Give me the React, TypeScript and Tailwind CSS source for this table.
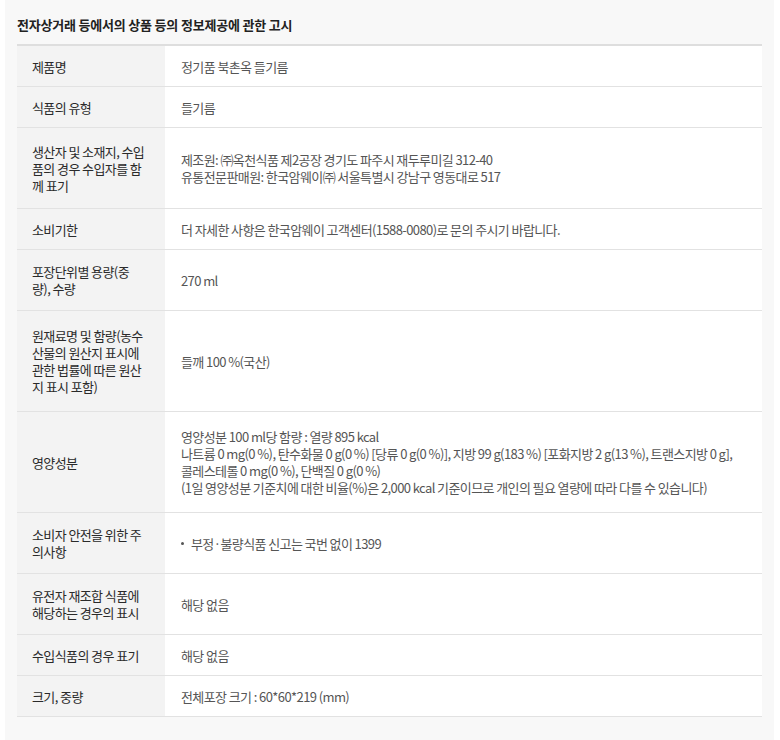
import React from 'react'

type Row = {
  label: string[]
  value: React.ReactNode
  h: string
}

const rows: Row[] = [
  { label: ['제품명'], value: '정기품 북촌옥 들기름', h: 'h-[41px]' },
  { label: ['식품의 유형'], value: '들기름', h: 'h-[41px]' },
  {
    label: ['생산자 및 소재지, 수입', '품의 경우 수입자를 함', '께 표기'],
    value: (
      <>
        <p>제조원: ㈜옥천식품 제2공장 경기도 파주시 재두루미길 312-40</p>
        <p>유통전문판매원: 한국암웨이㈜ 서울특별시 강남구 영동대로 517</p>
      </>
    ),
    h: 'h-[81px]',
  },
  { label: ['소비기한'], value: '더 자세한 사항은 한국암웨이 고객센터(1588-0080)로 문의 주시기 바랍니다.', h: 'h-[41px]' },
  { label: ['포장단위별 용량(중', '량), 수량'], value: '270 ml', h: 'h-[61px]' },
  {
    label: ['원재료명 및 함량(농수', '산물의 원산지 표시에', '관한 법률에 따른 원산', '지 표시 포함)'],
    value: '들깨 100 %(국산)',
    h: 'h-[101px]',
  },
  {
    label: ['영양성분'],
    value: (
      <>
        <p>영양성분 100 ml당 함량 : 열량 895 kcal</p>
        <p>나트륨 0 mg(0 %), 탄수화물 0 g(0 %) [당류 0 g(0 %)], 지방 99 g(183 %) [포화지방 2 g(13 %), 트랜스지방 0 g],</p>
        <p>콜레스테롤 0 mg(0 %), 단백질 0 g(0 %)</p>
        <p>(1일 영양성분 기준치에 대한 비율(%)은 2,000 kcal 기준이므로 개인의 필요 열량에 따라 다를 수 있습니다)</p>
      </>
    ),
    h: 'h-[101px]',
  },
  {
    label: ['소비자 안전을 위한 주', '의사항'],
    value: (
      <ul>
        <li className="flex items-center">
          <span className="mr-[7px] inline-block h-[3px] w-[3px] rounded-full bg-[#555]" />
          부정·불량식품 신고는 국번 없이 1399
        </li>
      </ul>
    ),
    h: 'h-[61px]',
  },
  { label: ['유전자 재조합 식품에', '해당하는 경우의 표시'], value: '해당 없음', h: 'h-[61px]' },
  { label: ['수입식품의 경우 표기'], value: '해당 없음', h: 'h-[41px]' },
  { label: ['크기, 중량'], value: '전체포장 크기 : 60*60*219 (mm)', h: 'h-[41px]' },
]

export default function App() {
  return (
    <div
      className="min-h-screen bg-white pl-[5px] pr-[6px] text-[13px] leading-[17px] tracking-[-0.6px]"
      style={{ fontFamily: '"Noto Sans CJK KR", "Noto Sans", sans-serif' }}
    >
      <div className="h-[740px] bg-[#f8f8f8] px-3 pt-4">
        <h2 className="mb-[11px] text-[13px] font-bold tracking-[-0.2px] text-[#222]">
          전자상거래 등에서의 상품 등의 정보제공에 관한 고시
        </h2>
        <div className="border-t-2 border-[#dedede]">
          {rows.map((row, i) => (
            <div key={i} className={`flex border-b border-[#e2e2e2] ${row.h}`}>
              <div className="flex w-[148px] shrink-0 flex-col justify-center bg-[#f3f3f3] px-[15px] text-[#2a2a2a]">
                {row.label.map((l, j) => (
                  <span key={j}>{l}</span>
                ))}
              </div>
              <div className="flex flex-1 flex-col justify-center bg-white pl-4 text-[#555]">{row.value}</div>
            </div>
          ))}
        </div>
      </div>
    </div>
  )
}
